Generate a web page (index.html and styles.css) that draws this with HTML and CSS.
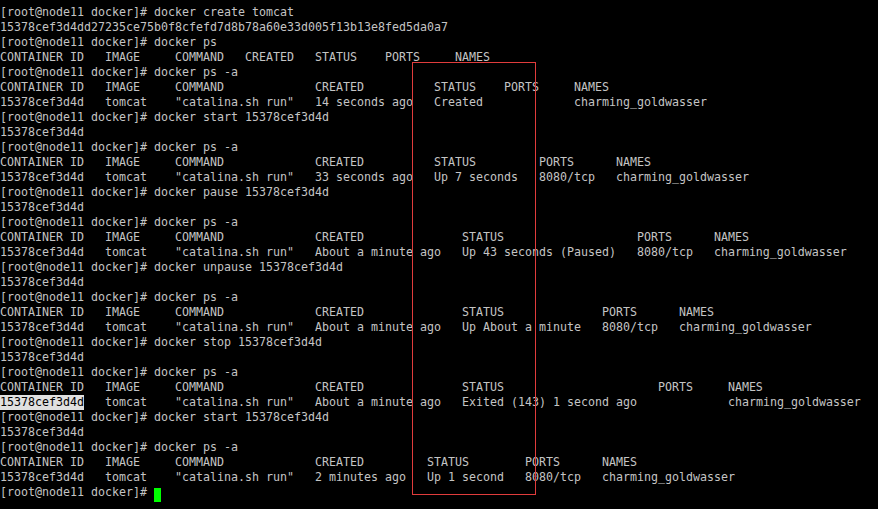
FILE: index.html
```html
<!DOCTYPE html>
<html>
<head>
<meta charset="utf-8">
<link rel="stylesheet" href="styles.css">
</head>
<body>
<div class="term">
<pre class="out">[root@node11 docker]# docker create tomcat
15378cef3d4dd27235ce75b0f8cfefd7d8b78a60e33d005f13b13e8fed5da0a7
[root@node11 docker]# docker ps
CONTAINER ID   IMAGE     COMMAND   CREATED   STATUS    PORTS     NAMES
[root@node11 docker]# docker ps -a
CONTAINER ID   IMAGE     COMMAND             CREATED          STATUS    PORTS     NAMES
15378cef3d4d   tomcat    "catalina.sh run"   14 seconds ago   Created             charming_goldwasser
[root@node11 docker]# docker start 15378cef3d4d
15378cef3d4d
[root@node11 docker]# docker ps -a
CONTAINER ID   IMAGE     COMMAND             CREATED          STATUS         PORTS      NAMES
15378cef3d4d   tomcat    "catalina.sh run"   33 seconds ago   Up 7 seconds   8080/tcp   charming_goldwasser
[root@node11 docker]# docker pause 15378cef3d4d
15378cef3d4d
[root@node11 docker]# docker ps -a
CONTAINER ID   IMAGE     COMMAND             CREATED              STATUS                   PORTS      NAMES
15378cef3d4d   tomcat    "catalina.sh run"   About a minute ago   Up 43 seconds (Paused)   8080/tcp   charming_goldwasser
[root@node11 docker]# docker unpause 15378cef3d4d
15378cef3d4d
[root@node11 docker]# docker ps -a
CONTAINER ID   IMAGE     COMMAND             CREATED              STATUS              PORTS      NAMES
15378cef3d4d   tomcat    "catalina.sh run"   About a minute ago   Up About a minute   8080/tcp   charming_goldwasser
[root@node11 docker]# docker stop 15378cef3d4d
15378cef3d4d
[root@node11 docker]# docker ps -a
CONTAINER ID   IMAGE     COMMAND             CREATED              STATUS                      PORTS     NAMES
<span class="sel">15378cef3d4d</span>   tomcat    "catalina.sh run"   About a minute ago   Exited (143) 1 second ago             charming_goldwasser
[root@node11 docker]# docker start 15378cef3d4d
15378cef3d4d
[root@node11 docker]# docker ps -a
CONTAINER ID   IMAGE     COMMAND             CREATED         STATUS        PORTS      NAMES
15378cef3d4d   tomcat    "catalina.sh run"   2 minutes ago   Up 1 second   8080/tcp   charming_goldwasser
[root@node11 docker]# <span class="cursor"> </span></pre>
<div class="mark"></div>
</div>
</body>
</html>
```
FILE: styles.css
```css
html, body {
  margin: 0;
  padding: 0;
  background: #000;
}
.term {
  position: relative;
  width: 878px;
  height: 509px;
  overflow: hidden;
  background: #000;
}
.out {
  margin: 0;
  padding: 5px 0 0 0;
  font-family: "DejaVu Sans Mono", "Liberation Mono", monospace;
  font-size: 11.63px;
  line-height: 15px;
  color: #c4c4c4;
  white-space: pre;
}
.sel {
  display: inline-block;
  height: 15px;
  background: #e0e0e0;
  color: #000;
}
.cursor {
  display: inline-block;
  width: 7px;
  height: 14px;
  background: #00ff00;
  vertical-align: -3px;
}
.mark {
  position: absolute;
  left: 412px;
  top: 62px;
  width: 122px;
  height: 431px;
  border: 1px solid #e03c3c;
}
```
